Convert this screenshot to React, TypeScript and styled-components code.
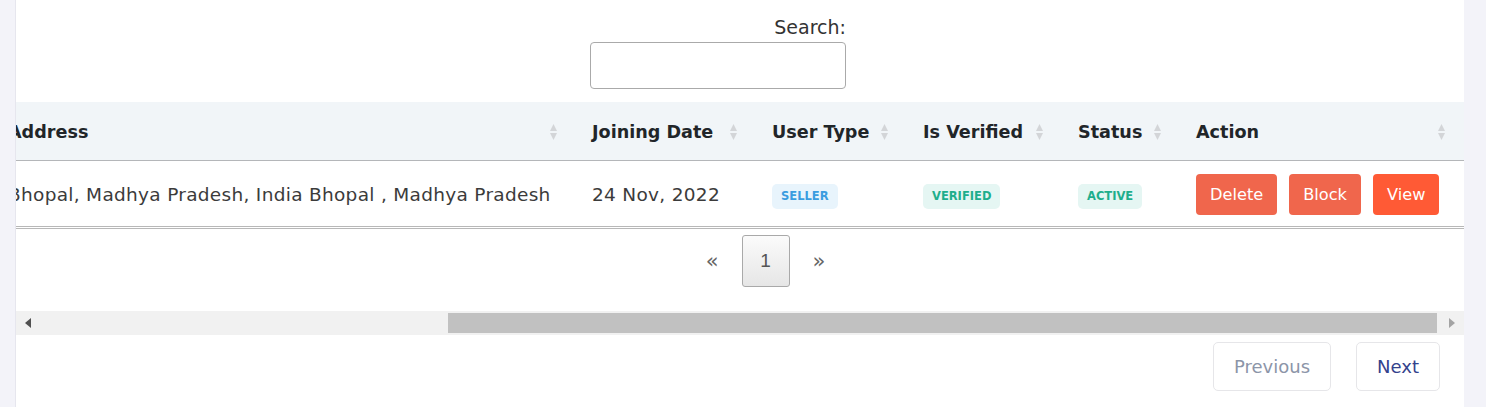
import React, { useLayoutEffect, useRef, useState } from "react";
import styled, { createGlobalStyle } from "styled-components";

const FONT = `"DejaVu Sans", "Noto Sans", sans-serif`;

const GlobalStyle = createGlobalStyle`
  html, body { margin: 0; padding: 0; background: #f3f3f9; }
  body { font-family: ${FONT}; color: #3b3b3b; }
  * { box-sizing: border-box; }
`;

const Page = styled.div`
  display: flex;
  height: 407px;
  padding: 0 22px 0 15px;
  overflow: hidden;
`;

const Card = styled.section`
  flex: 1;
  min-width: 0;
  background: #fff;
  border-left: 1px solid #e6e6ee;
  display: flex;
  flex-direction: column;
`;

const SearchRow = styled.div`
  display: flex;
  justify-content: center;
  padding: 16px 44px 0 0;
  margin-bottom: 13px;
`;

const SearchBox = styled.label`
  display: flex;
  flex-direction: column;
  align-items: flex-end;
  gap: 4px;
  font-size: 19px;
  line-height: 22px;
  color: #333;
`;

const SearchInput = styled.input`
  width: 256px;
  height: 47px;
  border: 1px solid #aaa;
  border-radius: 4px;
  background: #fff;
  font: inherit;
  padding: 0 8px;
  outline: none;
`;

const Viewport = styled.div`
  overflow: hidden;
  width: 100%;
`;

const Table = styled.table<{ $w: number }>`
  width: ${(p) => p.$w}px;
  table-layout: fixed;
  border-collapse: separate;
  border-spacing: 0;
`;

const Col = styled.col<{ $w: number }>`
  width: ${(p) => p.$w}px;
`;

const Th = styled.th`
  height: 59px;
  padding: 1px 0 0;
  background: #f1f5f8;
  border-bottom: 1px solid #b4b6b9;
  text-align: left;
  font-size: 17.6px;
  font-weight: 700;
  color: #212529;
  white-space: nowrap;
`;

const HeadInner = styled.div`
  display: flex;
  align-items: center;
  justify-content: space-between;
  padding: 0 19px 0 16px;
`;

const Td = styled.td`
  height: 68px;
  padding: 1px 16px 0;
  border-bottom: 3px double #b8b8b8;
  font-size: 18.5px;
  letter-spacing: 0.3px;
  color: #3b3b3b;
  white-space: nowrap;
  vertical-align: middle;
`;

const Badge = styled.span<{ $tone: "blue" | "green" }>`
  display: inline-flex;
  align-items: center;
  vertical-align: -4px;
  height: 25px;
  padding: 0 9px;
  border-radius: 5px;
  font-size: 11.5px;
  font-weight: 700;
  letter-spacing: 0;
  text-transform: uppercase;
  background: ${(p) => (p.$tone === "blue" ? "#e8f4fc" : "#e5f6f3")};
  color: ${(p) => (p.$tone === "blue" ? "#3a9de0" : "#1eae8c")};
`;

const Actions = styled.div`
  display: flex;
  gap: 12px;
`;

const ActionButton = styled.button<{ $strong?: boolean }>`
  height: 41px;
  padding: 0 14px;
  border: none;
  border-radius: 4px;
  font-family: ${FONT};
  font-size: 16.2px;
  color: #fff;
  background: ${(p) => (p.$strong ? "#ff5a35" : "#f0664c")};
`;

const Pager = styled.div`
  height: 82px;
  display: flex;
  align-items: flex-start;
  justify-content: center;
  gap: 23px;
  padding: 6px 0 0 51px;
`;

const PagerArrow = styled.span`
  height: 52px;
  display: flex;
  align-items: center;
  font-family: "DejaVu Sans", sans-serif;
  font-size: 21px;
  color: #666;
`;

const PagerCurrent = styled.span`
  width: 48px;
  height: 52px;
  display: flex;
  align-items: center;
  justify-content: center;
  border: 1px solid #a9a9a9;
  border-radius: 3px;
  background: linear-gradient(to bottom, #fbfbfb 0%, #e6e6e6 100%);
  font-family: "Liberation Sans", sans-serif;
  font-size: 19px;
  color: #555;
`;

const ScrollTrack = styled.div`
  height: 24px;
  display: flex;
  background: #f1f1f1;
`;

const ScrollButton = styled.div`
  width: 24px;
  display: flex;
  align-items: center;
  justify-content: center;
`;

const Arrow = styled.span<{ $dir: "left" | "right" }>`
  width: 0;
  height: 0;
  border-top: 5.5px solid transparent;
  border-bottom: 5.5px solid transparent;
  ${(p) =>
    p.$dir === "left"
      ? "border-right: 6px solid #505050;"
      : "border-left: 6px solid #a3a3a3;"}
`;

const ThumbLane = styled.div`
  flex: 1;
  display: flex;
  padding: 2px 0;
`;

const Thumb = styled.div`
  height: 100%;
  background: #c1c1c1;
`;

const Footer = styled.div`
  display: flex;
  justify-content: flex-end;
  gap: 25px;
  padding: 7px 24px 0 0;
`;

const NavButton = styled.button<{ $muted?: boolean }>`
  height: 49px;
  padding: 0 20px;
  background: #fff;
  border: 1px solid #e6e6e9;
  border-radius: 5px;
  font-family: ${FONT};
  font-size: 18px;
  color: ${(p) => (p.$muted ? "#8c95a8" : "#34428c")};
`;

const SortIcon = () => (
  <svg width="7" height="16" viewBox="0 0 7 16" aria-hidden>
    <polygon points="0,7 3.5,0 7,7" fill="#d3d5d8" />
    <polygon points="0,9 7,9 3.5,16" fill="#d3d5d8" />
  </svg>
);

type Column = { key: string; label: string; width: number };

const columns: Column[] = [
  { key: "name", label: "Name", width: 200 },
  { key: "email", label: "Email", width: 240 },
  { key: "mobile", label: "Mobile No.", width: 138 },
  { key: "address", label: "Address", width: 584 },
  { key: "date", label: "Joining Date", width: 180 },
  { key: "type", label: "User Type", width: 151 },
  { key: "verified", label: "Is Verified", width: 155 },
  { key: "status", label: "Status", width: 118 },
  { key: "action", label: "Action", width: 284 },
];

const tableWidth = columns.reduce((s, c) => s + c.width, 0);

export default function App() {
  const viewportRef = useRef<HTMLDivElement>(null);
  const laneRef = useRef<HTMLDivElement>(null);
  const [thumb, setThumb] = useState({ left: 0, width: 0 });

  useLayoutEffect(() => {
    const vp = viewportRef.current;
    const lane = laneRef.current;
    if (!vp || !lane) return;
    vp.scrollLeft = vp.scrollWidth - vp.clientWidth;
    const laneWidth = lane.clientWidth;
    const ratio = vp.clientWidth / vp.scrollWidth;
    setThumb({
      width: Math.round(laneWidth * ratio),
      left: Math.round((laneWidth * vp.scrollLeft) / vp.scrollWidth) - 3,
    });
  }, []);

  return (
    <>
      <GlobalStyle />
      <Page>
        <Card>
          <SearchRow>
            <SearchBox>
              Search:
              <SearchInput type="search" />
            </SearchBox>
          </SearchRow>
          <Viewport ref={viewportRef}>
            <Table $w={tableWidth}>
              <colgroup>
                {columns.map((c) => (
                  <Col key={c.key} $w={c.width} />
                ))}
              </colgroup>
              <thead>
                <tr>
                  {columns.map((c) => (
                    <Th key={c.key}>
                      <HeadInner>
                        <span>{c.label}</span>
                        <SortIcon />
                      </HeadInner>
                    </Th>
                  ))}
                </tr>
              </thead>
              <tbody>
                <tr>
                  <Td>Rahul Sharma</Td>
                  <Td>rahul@example.com</Td>
                  <Td>9876543210</Td>
                  <Td>Bhopal, Madhya Pradesh, India Bhopal , Madhya Pradesh</Td>
                  <Td>24 Nov, 2022</Td>
                  <Td>
                    <Badge $tone="blue">Seller</Badge>
                  </Td>
                  <Td>
                    <Badge $tone="green">Verified</Badge>
                  </Td>
                  <Td>
                    <Badge $tone="green">Active</Badge>
                  </Td>
                  <Td>
                    <Actions>
                      <ActionButton>Delete</ActionButton>
                      <ActionButton>Block</ActionButton>
                      <ActionButton $strong>View</ActionButton>
                    </Actions>
                  </Td>
                </tr>
              </tbody>
            </Table>
          </Viewport>
          <Pager>
            <PagerArrow>«</PagerArrow>
            <PagerCurrent>1</PagerCurrent>
            <PagerArrow>»</PagerArrow>
          </Pager>
          <ScrollTrack>
            <ScrollButton>
              <Arrow $dir="left" />
            </ScrollButton>
            <ThumbLane ref={laneRef}>
              <Thumb style={{ marginLeft: thumb.left, width: thumb.width }} />
            </ThumbLane>
            <ScrollButton>
              <Arrow $dir="right" />
            </ScrollButton>
          </ScrollTrack>
          <Footer>
            <NavButton $muted>Previous</NavButton>
            <NavButton>Next</NavButton>
          </Footer>
        </Card>
      </Page>
    </>
  );
}
